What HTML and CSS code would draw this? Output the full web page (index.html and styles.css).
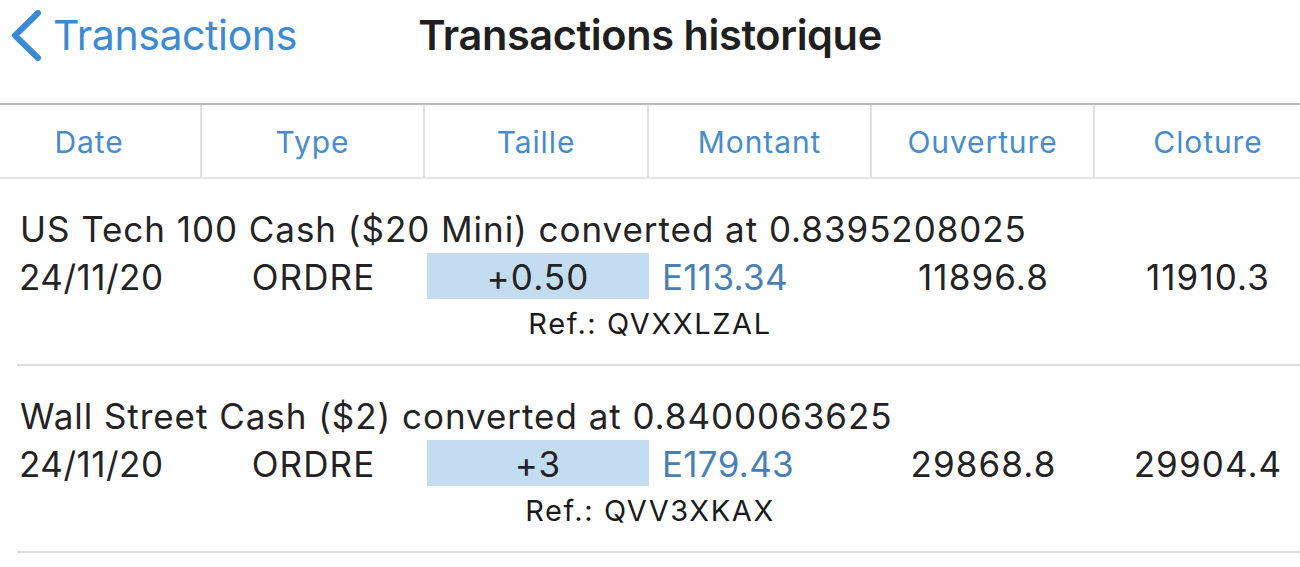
FILE: index.html
```html
<!DOCTYPE html>
<html lang="fr">
<head>
<meta charset="utf-8">
<title>Transactions historique</title>
<link rel="stylesheet" href="styles.css">
</head>
<body>
<header class="nav">
  <a class="back" href="#">
    <svg class="chev" width="40" height="70" viewBox="0 0 40 70" aria-hidden="true">
      <path d="M28 13 L5 35.5 L28 58" fill="none" stroke="#3d8ad4" stroke-width="6" stroke-linecap="round" stroke-linejoin="round"/>
    </svg>
    <span>Transactions</span>
  </a>
  <h1 class="title">Transactions historique</h1>
  <div></div>
</header>

<div class="thead grid">
  <div class="th c1">Date</div>
  <div class="th">Type</div>
  <div class="th">Taille</div>
  <div class="th">Montant</div>
  <div class="th">Ouverture</div>
  <div class="th c6">Cloture</div>
</div>

<section class="row">
  <div class="name">US Tech 100 Cash ($20 Mini) converted at 0.8395208025</div>
  <div class="cells grid">
    <div class="td c1">24/11/20</div>
    <div class="td">ORDRE</div>
    <div class="td size">+0.50</div>
    <div class="td amount">E113.34</div>
    <div class="td">11896.8</div>
    <div class="td c6">11910.3</div>
  </div>
  <div class="ref">Ref.: QVXXLZAL</div>
</section>

<section class="row">
  <div class="name">Wall Street Cash ($2) converted at 0.8400063625</div>
  <div class="cells grid">
    <div class="td c1">24/11/20</div>
    <div class="td">ORDRE</div>
    <div class="td size">+3</div>
    <div class="td amount">E179.43</div>
    <div class="td">29868.8</div>
    <div class="td c6">29904.4</div>
  </div>
  <div class="ref">Ref.: QVV3XKAX</div>
</section>
</body>
</html>
```

FILE: styles.css
```css
html, body {
  margin: 0;
  padding: 0;
  background: #ffffff;
}
body {
  font-family: "Inter", "Roboto", "Liberation Sans", sans-serif;
  color: #232325;
  overflow: hidden;
}

.nav {
  height: 103px;
  border-bottom: 2px solid #bcbcbf;
  display: grid;
  grid-template-columns: 1fr auto 1fr;
  align-items: start;
}
.back {
  display: flex;
  align-items: flex-start;
  text-decoration: none;
  color: #3d8ad4;
  font-size: 41px;
  line-height: 52px;
  padding-top: 9px;
  padding-left: 10px;
  letter-spacing: -0.4px;
}
.chev {
  margin-top: -9px;
  margin-right: 3px;
  flex: none;
}
.title {
  margin: 0;
  padding-top: 9px;
  font-size: 41.5px;
  line-height: 52px;
  font-weight: 600;
  color: #1f1f21;
  letter-spacing: -0.4px;
}

.grid {
  display: grid;
  grid-template-columns: 202px 223px 224px 223px 223px 1fr;
}

.thead {
  height: 72px;
  border-bottom: 2px solid #e4e4e6;
}
.th {
  border-right: 2px solid #e1e1e3;
  display: flex;
  align-items: center;
  justify-content: center;
  color: #4a8bcb;
  font-size: 30px;
  letter-spacing: 0.9px;
  padding-top: 1px;
}
.th.c1 { padding-right: 22px; }
.th.c6 { border-right: none; padding-left: 21px; }

.row {
  display: flex;
  flex-direction: column;
  padding-top: 29px;
}
.row::after {
  content: "";
  display: block;
  height: 2px;
  margin-left: 17px;
  margin-top: 23px;
  background: #dcdcde;
}
.name {
  padding-left: 20px;
  font-size: 35px;
  line-height: 42px;
  letter-spacing: 0.95px;
  white-space: nowrap;
}
.cells {
  margin-top: 3px;
  height: 44px;
}
.td {
  font-size: 35px;
  line-height: 44px;
  text-align: center;
  padding-top: 2px;
  letter-spacing: 1.1px;
  box-sizing: border-box;
}
.td.c1 { text-align: left; padding-left: 19px; letter-spacing: 0.5px; }
.td.c6 { padding-left: 21px; }
.td.size {
  background: #c3dcf0;
  margin-left: 2px;
}
.td.amount {
  text-align: left;
  padding-left: 13px;
  letter-spacing: 0.3px;
  color: #4a7fb3;
}
.ref {
  margin-top: 9px;
  text-align: center;
  font-size: 29px;
  line-height: 35px;
  letter-spacing: 1.6px;
  color: #1a1a1a;
}
```
